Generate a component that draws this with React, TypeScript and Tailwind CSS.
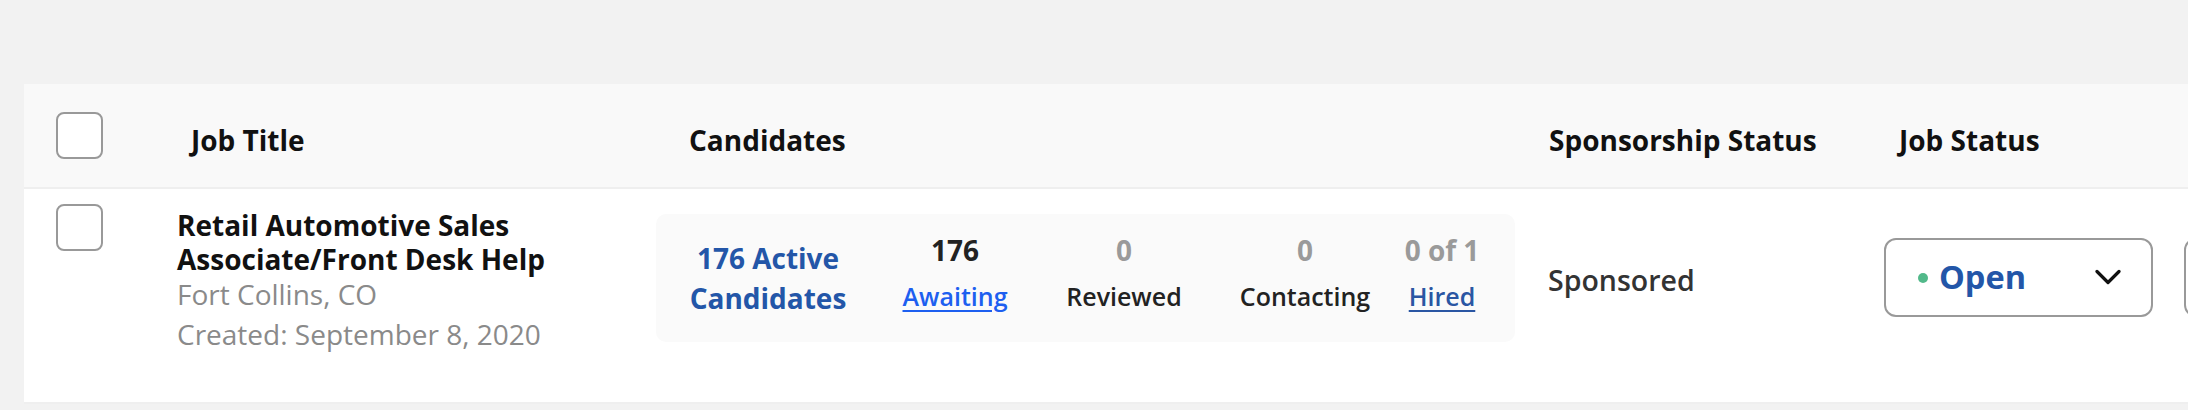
import React from 'react';

const font = "font-['Open_Sans',_'Noto_Sans',_sans-serif]";

const Checkbox: React.FC = () => (
  <div className="w-[47px] h-[47px] shrink-0 rounded-[8px] border-2 border-[#999999] bg-white" />
);

type Stat = { value: string; label: string; width: string; valueClass: string; labelClass: string };

const stats: Stat[] = [
  { value: '176', label: 'Awaiting', width: 'w-[150px]', valueClass: 'text-[#222222]', labelClass: 'text-[#1d5ff0] underline' },
  { value: '0', label: 'Reviewed', width: 'w-[188px]', valueClass: 'text-[#9a9a9a]', labelClass: 'text-[#222222]' },
  { value: '0', label: 'Contacting', width: 'w-[174px]', valueClass: 'text-[#9a9a9a]', labelClass: 'text-[#222222]' },
  { value: '0 of 1', label: 'Hired', width: 'w-[100px]', valueClass: 'text-[#9a9a9a]', labelClass: 'text-[#2a56a3] underline' },
];

export default function App() {
  return (
    <div className={`w-full h-[410px] overflow-hidden bg-[#f2f2f2] pt-[84px] pl-[24px] ${font}`}>
      <div className="w-[2400px] bg-white">
        {/* header */}
        <div className="flex items-center h-[105px] pl-[32px] bg-[#f9f9f9] border-b-2 border-[#efefef]">
          <Checkbox />
          <div className="ml-[88px] w-[498px] shrink-0 pt-[8px] text-[28px] font-bold text-[#111111]">Job Title</div>
          <div className="w-[860px] shrink-0 pt-[8px] text-[28px] font-bold text-[#111111]">Candidates</div>
          <div className="w-[350px] shrink-0 pt-[8px] text-[28px] font-bold text-[#111111]">Sponsorship Status</div>
          <div className="shrink-0 pt-[8px] text-[28px] font-bold text-[#111111]">Job Status</div>
        </div>

        {/* row */}
        <div className="flex items-start h-[215px] pl-[32px] border-b-2 border-[#efefef]">
          <div className="mt-[15px] shrink-0">
            <Checkbox />
          </div>
          <div className="ml-[74px] w-[479px] shrink-0 pt-[20px]">
            <div className="text-[28px] leading-[33.6px] font-bold text-[#111111]">
              Retail Automotive Sales
              <br />
              Associate/Front Desk Help
            </div>
            <div className="-mt-[2px] text-[28px] leading-[40px] text-[#8a8a8a]">Fort Collins, CO</div>
            <div className="text-[28px] leading-[40px] text-[#8a8a8a]">Created: September 8, 2020</div>
          </div>

          <div className="mt-[25px] flex shrink-0 w-[859px] h-[128px] rounded-[10px] bg-[#fafafa]">
            <div className="w-[224px] shrink-0 flex items-center justify-center text-center text-[28px] leading-[40px] font-bold text-[#2356a8]">
              176 Active
              <br />
              Candidates
            </div>
            {stats.map((s) => (
              <div key={s.label} className={`${s.width} shrink-0 flex flex-col items-center justify-center pb-[10px]`}>
                <div className={`text-[28px] leading-[40px] font-bold ${s.valueClass}`}>{s.value}</div>
                <div className={`mt-[6px] text-[25px] leading-[40px] font-semibold underline-offset-[4px] ${s.labelClass}`}>
                  {s.label}
                </div>
              </div>
            ))}
          </div>

          <div className="ml-[33px] w-[336px] shrink-0 mt-[71px] text-[28.5px] leading-[40px] font-semibold text-[#333333]">
            Sponsored
          </div>

          <div className="mt-[49px] flex shrink-0 items-center w-[269px] h-[79px] rounded-[12px] border-2 border-[#999999] bg-white pl-[32px] pr-[30px]">
            <span className="w-[10px] h-[10px] rounded-full bg-[#52b98a]" />
            <span className="ml-[11px] text-[32.5px] font-bold text-[#2356a8]">Open</span>
            <svg className="ml-auto" width="26" height="17" viewBox="0 0 26 17" fill="none">
              <path d="M2 2.5 L13 13.5 L24 2.5" stroke="#111111" strokeWidth="3.2" strokeLinecap="round" strokeLinejoin="round" />
            </svg>
          </div>

          <div className="mt-[49px] ml-[31px] w-[120px] h-[79px] shrink-0 rounded-[12px] border-2 border-[#999999] bg-white" />
        </div>
      </div>
    </div>
  );
}
